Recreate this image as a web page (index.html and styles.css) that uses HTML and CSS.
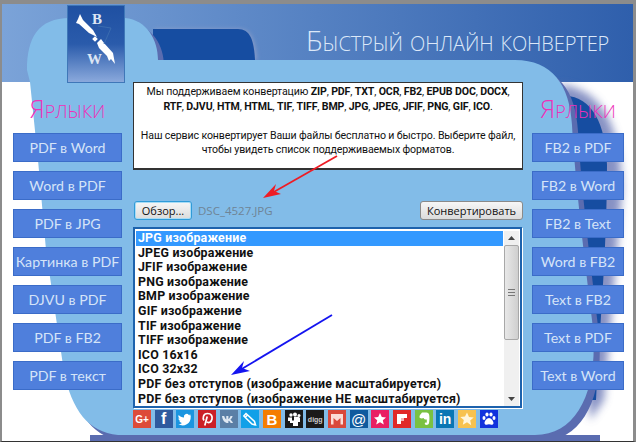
FILE: index.html

```html
<!DOCTYPE html>
<html lang="ru">
<head>
    <meta charset="UTF-8">
    <title>Быстрый онлайн конвертер</title>
    <link rel="stylesheet" href="styles.css">
</head>
<body>
    <div class="page">
        <svg class="backdrop" width="640" height="445" viewBox="0 0 640 445">
            <defs>
                <filter id="soft" x="-30%" y="-10%" width="160%" height="120%"><feGaussianBlur stdDeviation="4"/></filter>
                <filter id="soft2" x="-20%" y="-20%" width="140%" height="140%"><feGaussianBlur stdDeviation="2"/></filter>
                <path id="blob" d="M27 70C27 38 38 18 70 18L125 18C147 20 158 40 158 60L515 60C552 60 570 85 572 125C574 165 582 240 592 320C600 385 580 435 535 435L118 435C88 432 72 410 64 372L46 250L38 160L30 82Z"/>
            </defs>
            <path d="M155 29L238 29C252 29 255 42 257 60L155 60Z" fill="#8a9cc8" filter="url(#soft2)"/>
            <path d="M153 29L238 29C250 29 254 40 255 60L153 60Z" fill="#164da1"/>
            <path d="M560 84C600 90 620 120 622 190L604 400L590 420Z" fill="#5f6db0" opacity=".75" filter="url(#soft)"/>
            <path d="M565 96C592 96 606 125 607 165C607 250 600 320 596 400L585 400Z" fill="#164da1"/>
            <use href="#blob" transform="translate(6 6)" fill="#5a6cb0"/>
            <rect x="90" y="435" width="510" height="6" fill="#5a6cb0"/>
            <use href="#blob" fill="#82bce8"/>
        </svg>

        <div class="header">
            <div class="logo">
                <svg width="56" height="76" viewBox="0 0 56 76">
                    <path d="M12 8L15 14L25 24L29 31L21 27L11 18L8 17L10 13Z" fill="#fff"/>
                    <rect x="25" y="31" width="4" height="4" fill="#fff" transform="rotate(45 27 33)"/>
                    <path d="M29 37L33 33L36 37L45 47L47 58L43 53L41 55L39 50L31 42Z" fill="#fff"/>
                    <path d="M30 20L43 22L36 38" fill="none" stroke="#3a6cb0" stroke-width="1"/>
                    <text x="24" y="18" class="logo-letter">B</text>
                    <text x="19" y="58" class="logo-letter">W</text>
                </svg>
            </div>
            <div class="title">Быстрый онлайн конвертер</div>
        </div>

        <div class="content">
            <div class="side">
                <div class="side-title">Ярлыки</div>
                <a class="link-btn">PDF в Word</a>
                <a class="link-btn">Word в PDF</a>
                <a class="link-btn">PDF в JPG</a>
                <a class="link-btn">Картинка в PDF</a>
                <a class="link-btn">DJVU в PDF</a>
                <a class="link-btn">PDF в FB2</a>
                <a class="link-btn">PDF в текст</a>
            </div>

            <div class="center">
                <div class="info">
                    <p>Мы поддерживаем конвертацию <b>ZIP</b>, <b>PDF</b>, <b>TXT</b>, <b>OCR</b>, <b>FB2</b>, <b>EPUB DOC</b>, <b>DOCX</b>,<br>
                    <b>RTF</b>, <b>DJVU</b>, <b>HTM</b>, <b>HTML</b>, <b>TIF</b>, <b>TIFF</b>, <b>BMP</b>, <b>JPG</b>, <b>JPEG</b>, <b>JFIF</b>, <b>PNG</b>, <b>GIF</b>, <b>ICO</b>.</p>
                    <p>Наш сервис конвертирует Ваши файлы бесплатно и быстро. Выберите файл,<br>
                    чтобы увидеть список поддерживаемых форматов.</p>
                </div>

                <div class="controls">
                    <button class="btn btn-browse">Обзор...</button>
                    <span class="filename">DSC_4527.JPG</span>
                    <button class="btn btn-convert">Конвертировать</button>
                </div>

                <div class="listbox">
                    <ul class="formats">
                        <li class="selected">JPG изображение</li>
                        <li>JPEG изображение</li>
                        <li>JFIF изображение</li>
                        <li>PNG изображение</li>
                        <li>BMP изображение</li>
                        <li>GIF изображение</li>
                        <li>TIF изображение</li>
                        <li>TIFF изображение</li>
                        <li>ICO 16x16</li>
                        <li>ICO 32x32</li>
                        <li>PDF без отступов (изображение масштабируется)</li>
                        <li>PDF без отступов (изображение НЕ масштабируется)</li>
                    </ul>
                    <div class="scrollbar">
                        <div class="sb-arrow"><svg width="7" height="4" viewBox="0 0 7 4"><path d="M3.5 0L7 4H0Z" fill="#444"/></svg></div>
                        <div class="sb-thumb"><span class="sb-grip"></span></div>
                        <div class="sb-track"></div>
                        <div class="sb-arrow"><svg width="7" height="4" viewBox="0 0 7 4"><path d="M0 0H7L3.5 4Z" fill="#444"/></svg></div>
                    </div>
                </div>

                <div class="share">
                    <span class="icon gp">G+</span>
                    <span class="icon fb">f</span>
                    <span class="icon tw"><svg viewBox="0 0 18 18"><path d="M15 5.2l-1.6.5c.6-.4 1-.9 1.200-1.500-.6.300-1.200.600-1.800.700a2.800 2.800 0 0 0-4.800 2.600C5.700 7.400 3.900 6.400 2.700 4.900c-.7 1.200-.3 2.800.9 3.600-.4 0-.8-.100-1.200-.300 0 1.300.9 2.500 2.200 2.800-.4.100-.8.100-1.200 0 .4 1.100 1.400 1.900 2.600 1.900A5.700 5.700 0 0 1 2.400 14.100 8 8 0 0 0 14.700 7c.1-.7 0-1 .3-1.800z" fill="#fff"/></svg></span>
                    <span class="icon pi"><svg viewBox="0 0 18 18"><path d="M6 10.500C4.500 8.500 5 3.500 9.500 3.500c4 0 5 3 4.500 5.500-.5 3-3.500 4.500-5 2.700M9.200 6.500L6.800 15.500" fill="none" stroke="#fff" stroke-width="1.700"/></svg></span>
                    <span class="icon vk"><svg viewBox="0 0 18 18"><path d="M2 6h2.200c.5 1.700 1.300 3.100 2.100 3.500V6h2.100v2.900c.8-.1 1.600-1.300 2.100-2.900h2.100c-.4 1.800-1.400 3.100-2.200 3.700.9.500 1.900 1.500 2.600 3.300h-2.300c-.5-1.300-1.300-2.200-2.300-2.300V13h-.6C5 13 2.500 10.500 2 6z" fill="#dfe8f2"/></svg></span>
                    <span class="icon pen"><svg viewBox="0 0 18 18"><path d="M5 3.500L13.500 11.500L14.500 15L11 14L2.800 6ZM4.500 7L7 4.500" fill="none" stroke="#fff" stroke-width="1.500"/></svg></span>
                    <span class="icon bl">B</span>
                    <span class="icon ms"><svg viewBox="0 0 18 18"><circle cx="6" cy="5" r="1.700" fill="#fff"/><circle cx="10" cy="4.500" r="2" fill="#fff"/><circle cx="14" cy="5.500" r="1.500" fill="#fff"/><path d="M3 7.500h4v3h2V6.800h4.500l1.500 1V12h-2v4H8v-3H5V11H3z" fill="#fff"/></svg></span>
                    <span class="icon dg">digg</span>
                    <span class="icon gm"><svg viewBox="0 0 18 18"><path d="M3 4h12v10.500h-2.500V8L9 11 5.500 8v6.500H3z" fill="#fbdcd8"/></svg></span>
                    <span class="icon at">@</span>
                    <span class="icon st"><svg viewBox="0 0 18 18"><path d="M9 3l1.800 4 4.200.400-3.200 2.800 1 4.200L9 12.200 5.200 14.400l1-4.200L3 7.400l4.200-.400z" fill="#fff"/></svg></span>
                    <span class="icon fl"><svg viewBox="0 0 18 18"><path d="M4 4h10v4H8v6H4z" fill="#fff"/><path d="M8 8h3v3H8z" fill="#f5b5b5"/></svg></span>
                    <span class="icon ev"><svg viewBox="0 0 18 18"><path d="M5 5l2-2.500h4.500c1.500 0 2.500 1 2.700 2.500.4 2.500.3 6-.2 8-.4 1.800-2 2.200-3.500 1.800-1-.3-1-2 0-2.300.5 0 1 .1 1.300.3V9.500c-1.500.2-2.800-.3-3.200-1.500C7.500 8.500 6 8.500 5 8c-.8-.5-.5-2 0-3z" fill="#fff"/></svg></span>
                    <span class="icon li">in</span>
                    <span class="icon ys"><svg viewBox="0 0 18 18"><path d="M9 2.500l2 4.500 4.700.500-3.500 3.100 1 4.600L9 12.300 4.800 14.700l1-4.600L2.300 7l4.700-.500z" fill="#fff6dc"/></svg></span>
                    <span class="icon pw"><svg viewBox="0 0 18 18"><ellipse cx="4" cy="8" rx="1.500" ry="2" fill="#fff"/><ellipse cx="7" cy="4.500" rx="1.600" ry="2.100" fill="#fff"/><ellipse cx="11" cy="4.500" rx="1.600" ry="2.100" fill="#fff"/><ellipse cx="14" cy="8" rx="1.500" ry="2" fill="#fff"/><path d="M9 8c2 0 4.500 3 4.500 5 0 2-2 2-4.500 1.300C6.500 15 4.500 15 4.500 13c0-2 2.500-5 4.500-5z" fill="#fff"/></svg></span>
                </div>
            </div>

            <div class="side side-right">
                <div class="side-title">Ярлыки</div>
                <a class="link-btn">FB2 в PDF</a>
                <a class="link-btn">FB2 в Word</a>
                <a class="link-btn">FB2 в Text</a>
                <a class="link-btn">Word в FB2</a>
                <a class="link-btn">Text в FB2</a>
                <a class="link-btn">Text в PDF</a>
                <a class="link-btn">Text в Word</a>
            </div>
        </div>

        <svg class="arrows" width="640" height="445" viewBox="0 0 640 445">
            <path d="M337 156L272 193" stroke="#ee1c25" stroke-width="1.800" fill="none"/>
            <path d="M263 198L276 184L274 191L281 194Z" fill="#ee1c25"/>
            <path d="M332 315L240 370" stroke="#1414f0" stroke-width="1.800" fill="none"/>
            <path d="M231 375L244 361L242 368L250 371Z" fill="#1414f0"/>
        </svg>
    </div>
</body>
</html>
```

FILE: styles.css

```css
body {
    margin: 0;
    background-color: #ffffff;
    font-family: "Open Sans", sans-serif;
}
.page {
    position: relative;
    width: 640px;
    height: 445px;
    overflow: hidden;
    box-sizing: border-box;
    padding: 4px 7px 0 2px;
    background-color: #ffffff;
}
/* grey window edge */
.page::before {
    content: "";
    position: absolute;
    left: 0;
    top: 0;
    width: 636px;
    height: 442px;
    box-sizing: border-box;
    border: solid #8c8c8c;
    border-width: 4px 3px 1px 2px;
    border-bottom-color: #333;
}
.backdrop {
    position: absolute;
    left: 0;
    top: 0;
    z-index: 0;
}
.arrows {
    position: absolute;
    left: 0;
    top: 0;
    z-index: 3;
}
.header {
    display: flex;
    height: 78px;
    background: linear-gradient(90deg, #7ba3d8, #2f5fac);
}
.logo {
    position: relative;
    z-index: 1;
    box-sizing: border-box;
    width: 58px;
    height: 78px;
    margin: 1px 0 0 65px;
    border: 1px solid #3f77b8;
    background: linear-gradient(180deg, #1f50a2 0%, #2a5bab 50%, #8aa9dc 100%);
}
.logo-letter {
    font-family: "Liberation Serif", serif;
    font-size: 15px;
    font-weight: bold;
    fill: #dce6f4;
}
.title {
    position: relative;
    z-index: 1;
    margin: 17px 0 0 181px;
    font-family: "Open Sans", sans-serif;
    font-weight: 300;
    font-size: 28px;
    letter-spacing: -0.120px;
    font-variant: small-caps;
    color: #dce8f8;
    white-space: nowrap;
}
.content {
    position: relative;
    z-index: 1;
    display: grid;
    grid-template-columns: 109px 410px 92px;
    padding-left: 11px;
}
.side-title {
    height: 51px;
    line-height: 52px;
    text-align: center;
    font-family: "Open Sans", sans-serif;
    font-weight: 300;
    font-size: 25px;
    font-variant: small-caps;
    color: #ee30b8;
}
.link-btn {
    display: block;
    box-sizing: border-box;
    height: 29px;
    margin-bottom: 9px;
    line-height: 27px;
    text-align: center;
    white-space: nowrap;
    font-family: Lato, sans-serif;
    font-size: 14.200px;
    color: #d5e4f8;
    background-color: #4f7fdc;
    border: 1px solid #3b6cc8;
}
.center {
    margin: 0 9px 0 11px;
}
.info {
    box-sizing: border-box;
    height: 88px;
    padding: 2px 0 0;
    text-align: center;
    white-space: nowrap;
    font-family: Roboto, sans-serif;
    font-size: 10.600px;
    letter-spacing: -0.130px;
    line-height: 14.600px;
    color: #111;
    background-color: #ffffff;
    border: 1px solid #333;
    border-bottom-width: 2px;
}
.info p {
    margin: 0 0 14.600px;
}
.controls {
    display: flex;
    align-items: center;
    height: 20px;
    margin-top: 30px;
}
.btn {
    height: 19px;
    padding: 0;
    font-family: "Open Sans", sans-serif;
    font-size: 11px;
    color: #111;
    border-radius: 3px;
    background: linear-gradient(180deg, #f6f6f6, #dcdcdc);
    border: 1px solid #8a8a8a;
}
.btn-browse {
    width: 58px;
    margin-left: 1px;
    border-color: #2f9bd8;
    box-shadow: inset 0 0 0 1px #a8dcf6;
}
.btn-convert {
    width: 103px;
    margin-left: auto;
}
.filename {
    margin-left: 6px;
    font-size: 11.500px;
    color: #6f8496;
}
.listbox {
    display: flex;
    box-sizing: border-box;
    height: 181px;
    width: 389px;
    margin-top: 7px;
    padding: 2px 1px 0;
    background-color: #ffffff;
    border: 2px solid #1d62ad;
    box-shadow: 1px 1px 0 #ffffff;
}
.formats {
    flex: 1;
    margin: 0;
    padding: 0;
    list-style: none;
    font-family: Roboto, sans-serif;
    font-weight: bold;
    font-size: 12.400px;
    letter-spacing: 0.200px;
    line-height: 14.600px;
    color: #111;
}
.formats li {
    padding-left: 2px;
    white-space: nowrap;
}
.formats .selected {
    color: #ffffff;
    background-color: #3399ff;
}
.scrollbar {
    display: flex;
    flex-direction: column;
    width: 15px;
    margin-left: 1px;
    background-color: #f0f0f0;
}
.sb-arrow {
    display: flex;
    align-items: center;
    justify-content: center;
    height: 14px;
}
.sb-thumb {
    display: flex;
    align-items: center;
    justify-content: center;
    box-sizing: border-box;
    height: 95px;
    background: linear-gradient(90deg, #e8e8e8, #cfcfcf);
    border: 1px solid #a8a8a8;
    border-radius: 2px;
}
.sb-grip {
    width: 7px;
    height: 5px;
    border-top: 1px solid #777;
    border-bottom: 1px solid #777;
    background: linear-gradient(#777 0 0) center / 100% 1px no-repeat;
}
.sb-track {
    flex: 1;
}
.share {
    display: flex;
    gap: 3.670px;
    margin-top: 2px;
}
.icon {
    display: flex;
    align-items: center;
    justify-content: center;
    width: 18px;
    height: 18px;
    flex: none;
    overflow: hidden;
    font-family: "Liberation Sans", sans-serif;
    font-weight: bold;
    font-size: 12px;
    color: #ffffff;
}
.icon svg {
    width: 18px;
    height: 18px;
}
.gp { background-color: #dd4b39; font-size: 10px; }
.fb { background-color: #2f5a9e; font-size: 16px; }
.tw { background-color: #1b95e0; }
.pi { background-color: #cb2027; }
.vk { background-color: #5b7fa6; }
.pen { background-color: #11a0e8; }
.bl { background-color: #f57d00; font-size: 15px; }
.ms { background-color: #1a1a1a; }
.dg { background-color: #1b1a19; font-size: 7px; color: #ccc; }
.gm { background-color: #d9483b; }
.at { background-color: #0f5a9e; font-size: 15px; font-weight: normal; }
.st { background-color: #e91e63; }
.fl { background-color: #e12828; }
.ev { background-color: #7ac142; }
.li { background-color: #0976b4; font-size: 14px; }
.ys { background-color: #f7c24f; }
.pw { background-color: #1133dd; }
```
